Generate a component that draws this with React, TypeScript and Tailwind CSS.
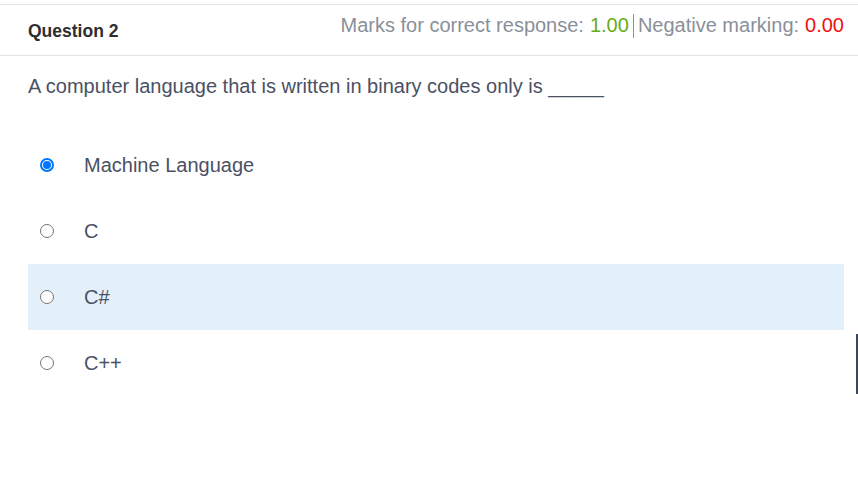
const options = ["Machine Language", "C", "C#", "C++"];

function Radio({ checked }: { checked: boolean }) {
  return checked ? (
    <span className="flex h-[14px] w-[14px] items-center justify-center rounded-full border-2 border-[#0075ff] bg-white">
      <span className="h-[8px] w-[8px] rounded-full bg-[#0075ff]" />
    </span>
  ) : (
    <span className="h-[14px] w-[14px] rounded-full border border-[#767676] bg-white" />
  );
}

export default function App() {
  const selected = 0;
  const hovered = 2;
  return (
    <div className="relative h-[483px] w-[858px] overflow-hidden bg-white font-['Liberation_Sans',Arial,sans-serif]">
      <div className="mt-1 flex h-[52px] border-y border-[#e3e3e3] pr-[14px] pl-7">
        <div className="self-center pt-[3px] text-[17.5px] font-bold text-[#2e2e2e]">Question 2</div>
        <div className="ml-auto flex items-start pt-[8px] text-[20px] leading-6 text-[#8a9099]">
          <span>Marks for correct response: </span>
          <span className="ml-[6px] text-[#66ad14]">1.00</span>
          <span className="mx-[4px] mt-[1px] h-[24px] w-px bg-[#8a9099]" />
          <span>Negative marking: </span>
          <span className="ml-[6px] text-[#f01010]">0.00</span>
        </div>
      </div>

      <p className="mt-[18px] pl-7 text-[20px] leading-6 text-[#4a5164]">
        A computer language that is written in binary codes only is _____
      </p>

      <div className="mt-[34px] mr-[14px] ml-7 flex flex-col">
        {options.map((opt, i) => (
          <label
            key={opt}
            className={`flex h-[66px] items-center pl-[12px] ${i === hovered ? "bg-[#e4f0f9]" : ""}`}
          >
            <Radio checked={i === selected} />
            <span className="ml-[30px] text-[20px] leading-6 text-[#4a5164]">{opt}</span>
          </label>
        ))}
      </div>

      <div className="absolute top-[334px] right-0 h-[60px] w-[2px] bg-[#3f4756]" />
    </div>
  );
}
